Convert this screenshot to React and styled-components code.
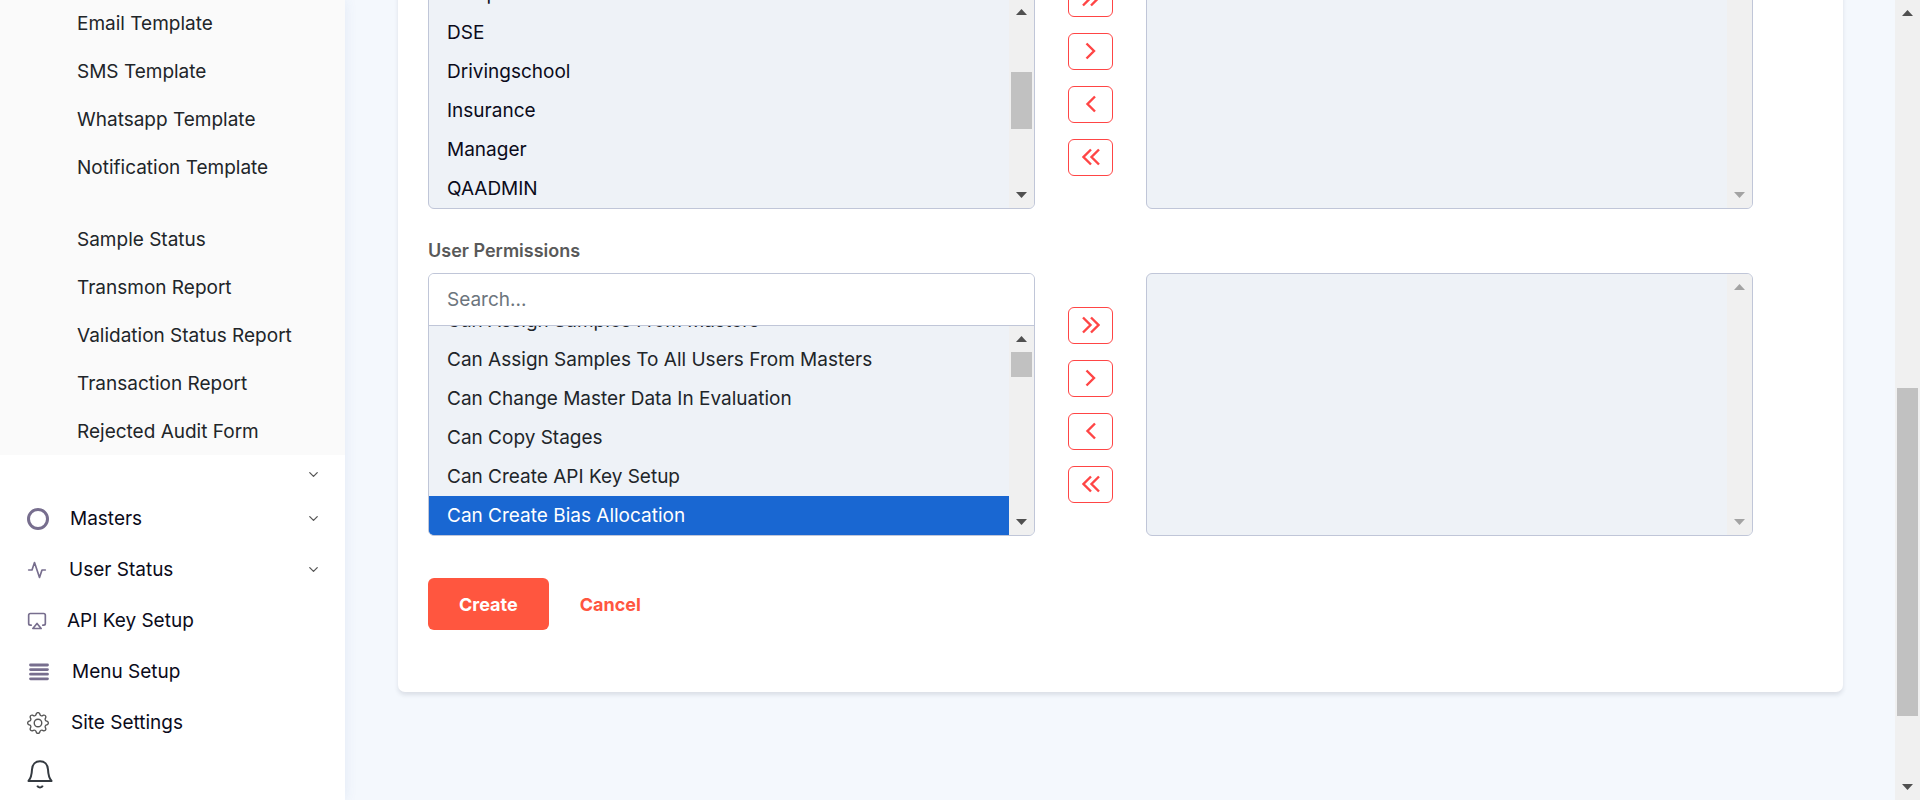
import React, { useEffect, useRef } from 'react';
import styled, { createGlobalStyle } from 'styled-components';
import { FiActivity, FiAirplay, FiChevronDown } from 'react-icons/fi';
import { BsGear } from 'react-icons/bs';

const GlobalStyle = createGlobalStyle`
  *, *::before, *::after { box-sizing: border-box; }
  body {
    margin: 0;
    background: #f4f8fd;
    font-family: Inter, "Liberation Sans", sans-serif;
    font-size: 19px;
    color: #212529;
  }
  button, input, select { font: inherit; }
`;

const Page = styled.div`
  display: flex;
  height: 100vh;
  overflow: hidden;
`;

const Sidebar = styled.nav`
  display: flex;
  flex: 0 0 345px;
  flex-direction: column;
  justify-content: flex-end;
  background: #fff;
  box-shadow: 0 0 12px rgba(69, 101, 173, 0.1);
  z-index: 1;
`;

const SubMenu = styled.ul`
  margin: 0;
  padding: 0;
  list-style: none;
  background: #fafafa;
`;

const SubItem = styled.li`
  margin-top: ${(p) => (p.$spaced ? 24 : 0)}px;
`;

const SubLink = styled.a`
  display: flex;
  align-items: center;
  height: 48px;
  padding-left: 77px;
  color: #212529;
  text-decoration: none;
`;

const MenuLink = styled.a`
  display: flex;
  flex: none;
  align-items: center;
  gap: ${(p) => p.$gap || 22}px;
  height: ${(p) => p.$height || 51}px;
  padding: 0 24px 0 27px;
  color: #0b0b1a;
  text-decoration: none;
`;

const MenuIcon = styled.span`
  display: flex;
  color: ${(p) => p.$color || '#776e8e'};
`;

const Chevron = styled(FiChevronDown)`
  margin-left: auto;
  color: #555;
`;

const Main = styled.main`
  display: flex;
  flex: 1;
  flex-direction: column;
  justify-content: flex-end;
  min-width: 0;
  padding: 0 52px 108px 53px;
`;

const Card = styled.form`
  padding: 30px 90px 62px 30px;
  background: #fff;
  border-radius: 7px;
  box-shadow: 0 3px 4px rgba(40, 50, 70, 0.12);
`;

const Field = styled.fieldset`
  min-width: 0;
  margin: 0 0 28px;
  padding: 0;
  border: 0;
`;

const Legend = styled.legend`
  margin-bottom: 10px;
  padding: 2px 0 0;
  color: #595959;
  font-size: 18px;
  font-weight: 600;
  line-height: 24px;
`;

const DualList = styled.div`
  display: grid;
  grid-template-columns: 1fr 111px 1fr;
  height: 263px;
`;

const Box = styled.div`
  display: flex;
  flex-direction: column;
  min-width: 0;
  min-height: 0;
  overflow: hidden;
  background: #eef2f7;
  border: 1px solid #c0c6d8;
  border-radius: 6px;
`;

const Search = styled.input`
  flex: none;
  width: 100%;
  height: 52px;
  padding: 0 18px;
  background: #fff;
  border: 0;
  border-bottom: 1px solid #c0c6d8;
  border-radius: 0;
  outline: 0;
  &::placeholder { color: #6c757d; opacity: 1; }
`;

const ListArea = styled.div`
  display: flex;
  flex: 1;
  min-height: 0;
`;

const List = styled.select`
  flex: 1;
  min-width: 0;
  height: 100%;
  padding: 0;
  overflow: auto;
  background: transparent;
  border: 0;
  border-radius: 0;
  outline: 0;
  color: ${(p) => p.$color};
  scrollbar-width: none;

  option {
    display: block;
    height: 39px;
    min-height: 39px;
    padding: 8px 18px;
  }
  option:checked {
    background: #1967d2 linear-gradient(#1967d2, #1967d2);
    color: #fff;
    -webkit-text-fill-color: #fff;
  }
`;

const ScrollTrack = styled.div`
  display: flex;
  flex: 0 0 25px;
  flex-direction: column;
  align-items: center;
  padding: 10px 0;
  background: #f0f0f0;
`;

const ScrollThumb = styled.div`
  width: 21px;
  height: ${(p) => p.$size}px;
  margin: ${(p) => p.$before}px 0 auto;
  background: #c1c1c1;
`;

const ArrowSvg = styled.svg`
  flex: none;
  fill: ${(p) => (p.$muted ? '#a3a3a3' : '#505050')};
  & + & { margin-top: auto; }
`;

const Moves = styled.div`
  display: flex;
  flex-direction: column;
  align-items: center;
  justify-content: center;
  gap: 16px;
`;

const MoveButton = styled.button`
  display: flex;
  align-items: center;
  justify-content: center;
  width: 45px;
  height: 37px;
  padding: 0;
  background: #fff;
  border: 1px solid #ff4545;
  border-radius: 6px;
`;

const Actions = styled.div`
  display: flex;
  padding-top: 14px;
`;

const ActionButton = styled.button`
  height: 52px;
  padding: 0 31px;
  background: ${(p) => (p.$primary ? '#ff563f' : 'transparent')};
  border: 0;
  border-radius: 6px;
  color: ${(p) => (p.$primary ? '#fff' : '#ff563f')};
  font-size: 18px;
  font-weight: 700;
`;

const Arrow = ({ down, muted }) => (
  <ArrowSvg width="11" height="6" viewBox="0 0 11 6" $muted={muted} aria-hidden="true">
    <path d={down ? 'M0 0h11L5.5 6z' : 'M0 6h11L5.5 0z'} />
  </ArrowSvg>
);

const Scroll = ({ muted, thumb }) => (
  <ScrollTrack aria-hidden="true">
    <Arrow muted={muted} />
    {thumb && <ScrollThumb $before={thumb[0]} $size={thumb[1]} />}
    <Arrow down muted={muted} />
  </ScrollTrack>
);

const moves = [
  ['Move all right', 'M1 1.5L8.5 9 1 16.5M9 1.5L16.5 9 9 16.5'],
  ['Move right', 'M4.5 1.5L12 9l-7.5 7.5'],
  ['Move left', 'M13 1.5L5.5 9l7.5 7.5'],
  ['Move all left', 'M9 1.5L1.5 9 9 16.5M17 1.5L9.5 9l7.5 7.5'],
];

function OptionList({ label, options, color, selected, offset }) {
  const ref = useRef(null);
  useEffect(() => {
    ref.current.scrollTop = offset;
  }, [offset]);
  return (
    <List ref={ref} multiple aria-label={label} $color={color} defaultValue={selected ? [selected] : []}>
      {options.map((o) => (
        <option key={o}>{o}</option>
      ))}
    </List>
  );
}

function Transfer({ title, options, color, selected, offset, thumb }) {
  return (
    <Field>
      <Legend>{title}</Legend>
      <DualList>
        <Box>
          <Search type="text" placeholder="Search..." aria-label={`Search ${title}`} />
          <ListArea>
            <OptionList label={title} options={options} color={color} selected={selected} offset={offset} />
            <Scroll thumb={thumb} />
          </ListArea>
        </Box>
        <Moves>
          {moves.map(([name, d]) => (
            <MoveButton key={name} type="button" aria-label={name}>
              <svg width="18" height="18" viewBox="0 0 18 18" fill="none" stroke="#ff4545" strokeWidth="2.4">
                <path d={d} />
              </svg>
            </MoveButton>
          ))}
        </Moves>
        <Box>
          <ListArea>
            <OptionList label={`Selected ${title}`} options={[]} color={color} offset={0} />
            <Scroll muted />
          </ListArea>
        </Box>
      </DualList>
    </Field>
  );
}

const subItems = [
  'Email Template', 'SMS Template', 'Whatsapp Template', 'Notification Template', 'Sample Status',
  'Transmon Report', 'Validation Status Report', 'Transaction Report', 'Rejected Audit Form',
];

const groups = ['Sample Voices', 'DSE', 'Drivingschool', 'Insurance', 'Manager', 'QAADMIN'];

const permissions = [
  'Can Assign Samples From Masters', 'Can Assign Samples To All Users From Masters',
  'Can Change Master Data In Evaluation', 'Can Copy Stages', 'Can Create API Key Setup',
  'Can Create Bias Allocation',
];

const Ring = () => (
  <svg width="22" height="22" viewBox="0 0 22 22" fill="none" stroke="currentColor" strokeWidth="3">
    <circle cx="11" cy="11" r="9.5" />
  </svg>
);

const Bars = () => (
  <svg width="22" height="18" viewBox="0 0 22 18" fill="none" stroke="currentColor" strokeWidth="2.8" strokeLinecap="round">
    <path d="M3.5 2h17M3.5 6.6h17M3.5 11.2h17M3.5 15.8h17" />
  </svg>
);

const Bell = () => (
  <svg width="26" height="29" viewBox="0 0 26 29" fill="none" stroke="currentColor" strokeWidth="2" strokeLinejoin="round">
    <path d="M1.5 21C4.5 17.5 4.8 14 5 9.5 5.3 4.3 8.5 1.2 13 1.2s7.7 3.1 8 8.3c.2 4.5.5 8 3.5 11.5z" />
    <path d="M10.2 25.6c1 2.4 4.6 2.4 5.6 0" />
  </svg>
);

export default function App() {
  return (
    <>
      <GlobalStyle />
      <Page>
        <Sidebar>
          <SubMenu>
            {subItems.map((s) => (
              <SubItem key={s} $spaced={s === 'Sample Status'}>
                <SubLink href="#">{s}</SubLink>
              </SubItem>
            ))}
          </SubMenu>
          <MenuLink href="#" $height={38} aria-label="Expand"><Chevron size={15} /></MenuLink>
          <MenuLink href="#" $gap={21}><MenuIcon><Ring /></MenuIcon>Masters<Chevron size={15} /></MenuLink>
          <MenuLink href="#"><MenuIcon><FiActivity size={20} /></MenuIcon>User Status<Chevron size={15} /></MenuLink>
          <MenuLink href="#" $gap={20}><MenuIcon><FiAirplay size={20} /></MenuIcon>API Key Setup</MenuLink>
          <MenuLink href="#" $gap={23}><MenuIcon><Bars /></MenuIcon>Menu Setup</MenuLink>
          <MenuLink href="#"><MenuIcon $color="#555"><BsGear size={22} /></MenuIcon>Site Settings</MenuLink>
          <MenuLink href="#" $height={52} aria-label="Notifications"><MenuIcon $color="#343a40"><Bell /></MenuIcon></MenuLink>
        </Sidebar>
        <Main>
          <Card>
            <Transfer title="Groups" options={groups} color="#0b0b1a" offset={25} thumb={[57, 57]} />
            <Transfer title="User Permissions" options={permissions} color="#212529" selected="Can Create Bias Allocation" offset={25} thumb={[10, 25]} />
            <Actions>
              <ActionButton type="button" $primary>Create</ActionButton>
              <ActionButton type="button">Cancel</ActionButton>
            </Actions>
          </Card>
        </Main>
        <Scroll thumb={[372, 328]} />
      </Page>
    </>
  );
}
